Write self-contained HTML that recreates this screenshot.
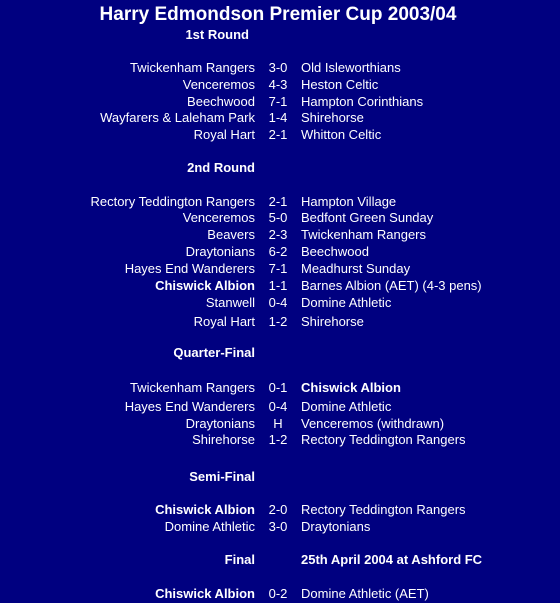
<!DOCTYPE html>
<html><head><meta charset="utf-8"><style>
html,body{margin:0;padding:0;background:#000080;width:560px;height:603px;overflow:hidden}
body{position:relative;font-family:"Liberation Sans",Arial,sans-serif;color:#fff;font-size:13px}
.t{position:absolute;left:0;width:556px;text-align:center;top:3px;font-size:19px;font-weight:bold;line-height:23px}
.r{position:absolute;left:0;width:560px;height:16px;line-height:16px}
.a{position:absolute;right:305px;text-align:right;white-space:nowrap}
.s{position:absolute;left:263px;width:30px;text-align:center}
.b{position:absolute;left:301px;white-space:nowrap}
.h{font-weight:bold}
</style></head><body>
<div class="t">Harry Edmondson Premier Cup 2003/04</div>
<div class="r" style="top:27px"><span class="a h" style="right:311px">1st Round</span></div>
<div class="r" style="top:60px"><span class="a">Twickenham Rangers</span><span class="s">3-0</span><span class="b">Old Isleworthians</span></div>
<div class="r" style="top:77px"><span class="a">Venceremos</span><span class="s">4-3</span><span class="b">Heston Celtic</span></div>
<div class="r" style="top:94px"><span class="a">Beechwood</span><span class="s">7-1</span><span class="b">Hampton Corinthians</span></div>
<div class="r" style="top:110px"><span class="a">Wayfarers &amp; Laleham Park</span><span class="s">1-4</span><span class="b">Shirehorse</span></div>
<div class="r" style="top:127px"><span class="a">Royal Hart</span><span class="s">2-1</span><span class="b">Whitton Celtic</span></div>
<div class="r" style="top:160px"><span class="a h">2nd Round</span></div>
<div class="r" style="top:194px"><span class="a">Rectory Teddington Rangers</span><span class="s">2-1</span><span class="b">Hampton Village</span></div>
<div class="r" style="top:210px"><span class="a">Venceremos</span><span class="s">5-0</span><span class="b">Bedfont Green Sunday</span></div>
<div class="r" style="top:227px"><span class="a">Beavers</span><span class="s">2-3</span><span class="b">Twickenham Rangers</span></div>
<div class="r" style="top:244px"><span class="a">Draytonians</span><span class="s">6-2</span><span class="b">Beechwood</span></div>
<div class="r" style="top:261px"><span class="a">Hayes End Wanderers</span><span class="s">7-1</span><span class="b">Meadhurst Sunday</span></div>
<div class="r" style="top:278px"><span class="a h">Chiswick Albion</span><span class="s">1-1</span><span class="b">Barnes Albion (AET) (4-3 pens)</span></div>
<div class="r" style="top:295px"><span class="a">Stanwell</span><span class="s">0-4</span><span class="b">Domine Athletic</span></div>
<div class="r" style="top:314px"><span class="a">Royal Hart</span><span class="s">1-2</span><span class="b">Shirehorse</span></div>
<div class="r" style="top:345px"><span class="a h">Quarter-Final</span></div>
<div class="r" style="top:380px"><span class="a">Twickenham Rangers</span><span class="s">0-1</span><span class="b h">Chiswick Albion</span></div>
<div class="r" style="top:399px"><span class="a">Hayes End Wanderers</span><span class="s">0-4</span><span class="b">Domine Athletic</span></div>
<div class="r" style="top:416px"><span class="a">Draytonians</span><span class="s">H</span><span class="b">Venceremos (withdrawn)</span></div>
<div class="r" style="top:432px"><span class="a">Shirehorse</span><span class="s">1-2</span><span class="b">Rectory Teddington Rangers</span></div>
<div class="r" style="top:469px"><span class="a h">Semi-Final</span></div>
<div class="r" style="top:502px"><span class="a h">Chiswick Albion</span><span class="s">2-0</span><span class="b">Rectory Teddington Rangers</span></div>
<div class="r" style="top:519px"><span class="a">Domine Athletic</span><span class="s">3-0</span><span class="b">Draytonians</span></div>
<div class="r" style="top:552px"><span class="a h">Final</span><span class="b h">25th April 2004 at Ashford FC</span></div>
<div class="r" style="top:586px"><span class="a h">Chiswick Albion</span><span class="s">0-2</span><span class="b">Domine Athletic (AET)</span></div>
</body></html>
